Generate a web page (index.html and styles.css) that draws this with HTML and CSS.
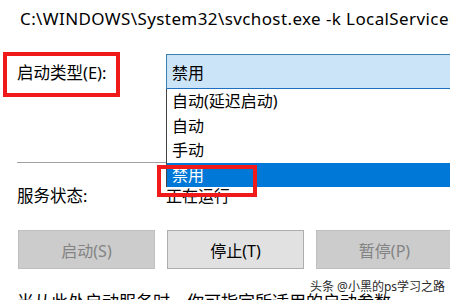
FILE: index.html
```html
<!DOCTYPE html>
<html lang="zh-CN">
<head>
  <meta charset="UTF-8" />
  <title>服务属性</title>
  <link rel="stylesheet" href="styles.css">
</head>
<body>

  <div class="dialog">
    <div class="path">C:\WINDOWS\System32\svchost.exe -k LocalServiceNetworkRestricted -p</div>

    <div class="row start-row">
      <label class="label">启动类型(E):</label>
      <div class="combo">
        <span>禁用</span>
        <!-- open dropdown list -->
        <ul class="combo-list">
          <li>自动(延迟启动)</li>
          <li>自动</li>
          <li>手动</li>
          <li class="selected">禁用</li>
        </ul>
      </div>
    </div>

    <div class="sep"></div>

    <div class="row status-row">
      <span class="label">服务状态:</span>
      <span class="value">正在运行</span>
    </div>

    <div class="buttons">
      <button class="btn disabled">启动(S)</button>
      <button class="btn">停止(T)</button>
      <button class="btn disabled">暂停(P)</button>
    </div>

    <p class="desc">当从此处启动服务时，你可指定所适用的启动参数。</p>
  </div>

  <!-- annotations -->
  <div class="mark mark-label"></div>
  <div class="mark mark-item"></div>
  <div class="watermark">头条 @小黑的ps学习之路</div>

</body>
</html>
```

FILE: styles.css
```css
/* RESET & GLOBAL */
* { margin: 0; padding: 0; box-sizing: border-box; }
body {
  background: #fff;
  color: #000;
  font-family: "Noto Sans", "Noto Sans CJK SC", sans-serif;
  font-size: 16px;
  overflow: hidden;
  position: relative;
  width: 450px; height: 300px;
}

.dialog { padding-top: 9px; width: 450px; height: 300px; overflow: hidden; }

.path {
  padding-left: 20px;
  font-size: 17px;
  letter-spacing: 0.4px;
  line-height: 20px;
  white-space: nowrap;
  overflow: hidden;
}

.row {
  display: flex; align-items: center;
}
.label {
  width: 166px;
  padding-left: 17px;
  flex-shrink: 0;
  font-size: 16.5px;
}

/* COMBO */
.start-row { margin-top: 25px; }
.combo {
  position: relative;
  width: 300px; height: 36px;
  background: #cce4f7;
  border: 1px solid #3c7fb1;
  border-bottom: 2px solid #1f6fc0;
  border-right: none;
  padding-left: 5px;
  display: flex; align-items: center;
  flex-shrink: 0;
}
.combo-list {
  list-style: none;
  position: absolute; top: 34px; left: -1px;
  width: 300px;
  background: #fff;
  border-left: 1px solid #444;
  z-index: 5;
}
.combo-list li {
  height: 24.5px; line-height: 24px;
  padding-left: 5px;
}
.combo-list li.selected {
  background: #0078d7;
  color: #fff;
}

.sep {
  margin: 72px 0 0 17px;
  height: 1px;
  background: #a0a0a0;
}

.status-row { margin-top: 21px; line-height: 24px; }

/* BUTTONS */
.buttons {
  display: flex; gap: 12px;
  margin: 22px 0 0 18px;
}
.btn {
  width: 137px; height: 39px;
  flex-shrink: 0;
  font: inherit;
  background: #e1e1e1;
  border: 1px solid #adadad;
  color: #000;
}
.btn.disabled {
  background: #cccccc;
  border-color: #bfbfbf;
  color: #838383;
}

.desc {
  margin: 21px 0 0 17px;
  font-size: 17px;
  line-height: 24px;
  white-space: nowrap;
}

/* RED ANNOTATION BOXES */
.mark {
  position: absolute;
  border: 4px solid #f01a1a;
  z-index: 10;
}
.mark-label { left: 3px; top: 52px; width: 117px; height: 45px; }
.mark-item { left: 157px; top: 165px; width: 100px; height: 32px; }

.watermark {
  position: absolute; left: 310px; top: 277px;
  font-size: 12px;
  color: #2a2a2a;
  text-shadow: 0 0 2px #fff, 0 0 2px #fff;
  white-space: nowrap;
  z-index: 10;
}
```
